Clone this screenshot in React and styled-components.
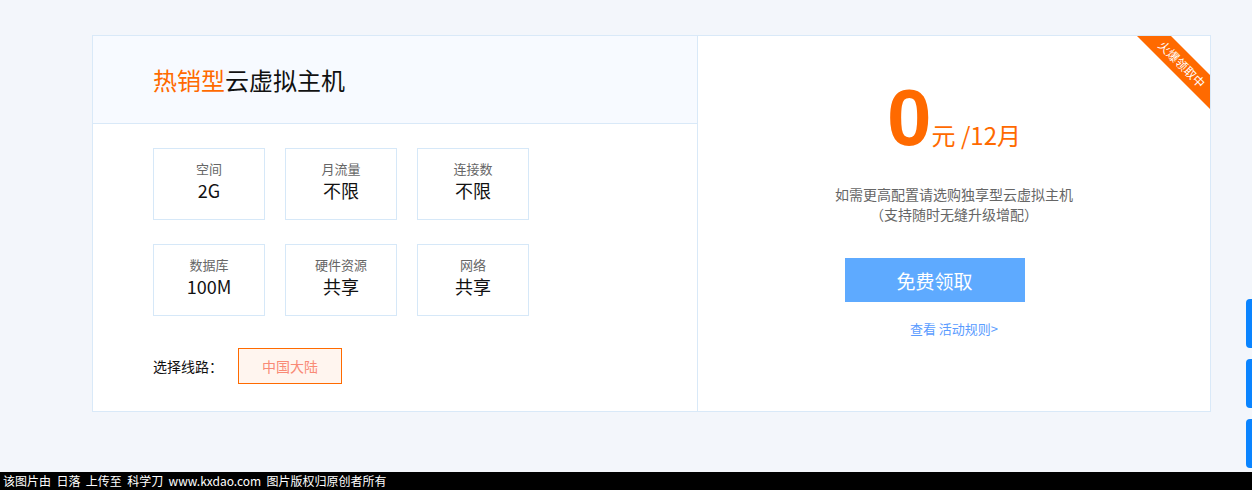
import React from "react";
import styled, { createGlobalStyle } from "styled-components";

const Global = createGlobalStyle`
  html, body {
    margin: 0;
    padding: 0;
    background: #f3f6fb;
    font-family: "Microsoft YaHei", "Noto Sans CJK SC", "Liberation Sans", sans-serif;
  }
`;

const Page = styled.div`
  height: 490px;
  padding-top: 35px;
  box-sizing: border-box;
`;

const Card = styled.div`
  margin-left: 92px;
  width: 1119px;
  height: 377px;
  display: flex;
  border: 1px solid #d9e9f8;
  box-sizing: border-box;
  background: #fff;
`;

const LeftPanel = styled.div`
  width: 604px;
  border-right: 1px solid #d9e9f8;
  display: flex;
  flex-direction: column;
`;

const Header = styled.div`
  height: 87px;
  background: #f7faff;
  border-bottom: 1px solid #d9e9f8;
  display: flex;
  align-items: center;
  padding-left: 60px;
  font-size: 24px;
  color: #111;
`;

const Hot = styled.span`
  color: #ff6a00;
`;

const Grid = styled.div`
  display: grid;
  grid-template-columns: repeat(3, 112px);
  grid-auto-rows: 72px;
  column-gap: 20px;
  row-gap: 24px;
  padding: 24px 0 0 60px;
`;

const Spec = styled.div`
  border: 1px solid #d6e8f8;
  display: flex;
  flex-direction: column;
  align-items: center;
  justify-content: center;
  padding-bottom: 6px;
`;

const SpecLabel = styled.div`
  font-size: 13px;
  color: #666;
  line-height: 18px;
`;

const SpecValue = styled.div`
  font-size: 18px;
  color: #111;
  line-height: 24px;
`;

const LineRow = styled.div`
  display: flex;
  align-items: center;
  padding: 32px 0 0 60px;
  font-size: 14px;
  color: #111;
`;

const LineButton = styled.div`
  margin-left: 15px;
  width: 104px;
  height: 36px;
  box-sizing: border-box;
  border: 1px solid #ff6a00;
  background: #fff5ef;
  color: #f98a76;
  font-size: 14px;
  display: flex;
  align-items: center;
  justify-content: center;
`;

const RightPanel = styled.div`
  flex: 1;
  position: relative;
  overflow: hidden;
  display: flex;
  flex-direction: column;
  align-items: center;
  padding-top: 42px;
`;

const Ribbon = styled.div`
  position: absolute;
  top: 0;
  right: 0;
  width: 74px;
  height: 74px;
  overflow: hidden;
`;

const RibbonBand = styled.div`
  position: absolute;
  left: -9px;
  top: 16px;
  width: 110px;
  height: 24px;
  line-height: 24px;
  background: #ff6a00;
  color: #fff;
  font-size: 12px;
  text-align: center;
  transform: rotate(45deg);
`;

const Price = styled.div`
  display: flex;
  align-items: baseline;
  color: #ff6a00;
`;

const Zero = styled.span`
  font-family: "Liberation Sans", Arial, sans-serif;
  font-weight: bold;
  font-size: 80px;
  line-height: 80px;
`;

const Unit = styled.span`
  font-size: 24px;
`;

const Note = styled.div`
  margin-top: 26px;
  font-size: 14px;
  color: #666;
  line-height: 20px;
  text-align: center;
`;

const ClaimButton = styled.div`
  margin-top: 34px;
  margin-right: 39px;
  width: 180px;
  height: 44px;
  background: #5eaaff;
  color: #fff;
  font-size: 19px;
  display: flex;
  align-items: center;
  justify-content: center;
`;

const RuleLink = styled.div`
  margin-top: 17px;
  font-size: 13px;
  color: #5a9cff;
`;

const SideTabs = styled.div`
  position: fixed;
  right: 0;
  top: 299px;
  display: flex;
  flex-direction: column;
  gap: 11px;
`;

const SideTab = styled.div`
  width: 6px;
  height: 49px;
  background: #0a84ff;
  border-radius: 4px 0 0 4px;
`;

const Footer = styled.div`
  position: fixed;
  left: 0;
  bottom: 0;
  width: 100%;
  height: 18px;
  background: #000;
  color: #fff;
  font-size: 12px;
  line-height: 18px;
  padding-left: 3px;
  box-sizing: border-box;
  white-space: pre;
`;

const specs = [
  { label: "空间", value: "2G" },
  { label: "月流量", value: "不限" },
  { label: "连接数", value: "不限" },
  { label: "数据库", value: "100M" },
  { label: "硬件资源", value: "共享" },
  { label: "网络", value: "共享" },
];

export default function App() {
  return (
    <Page>
      <Global />
      <Card>
        <LeftPanel>
          <Header>
            <Hot>热销型</Hot>云虚拟主机
          </Header>
          <Grid>
            {specs.map((s) => (
              <Spec key={s.label}>
                <SpecLabel>{s.label}</SpecLabel>
                <SpecValue>{s.value}</SpecValue>
              </Spec>
            ))}
          </Grid>
          <LineRow>
            选择线路：
            <LineButton>中国大陆</LineButton>
          </LineRow>
        </LeftPanel>
        <RightPanel>
          <Ribbon>
            <RibbonBand>火爆领取中</RibbonBand>
          </Ribbon>
          <Price>
            <Zero>0</Zero>
            <Unit>元 /12月</Unit>
          </Price>
          <Note>
            如需更高配置请选购独享型云虚拟主机
            <br />
            （支持随时无缝升级增配）
          </Note>
          <ClaimButton>免费领取</ClaimButton>
          <RuleLink>查看 活动规则&gt;</RuleLink>
        </RightPanel>
      </Card>
      <SideTabs>
        <SideTab />
        <SideTab />
        <SideTab />
      </SideTabs>
      <Footer>该图片由  日落  上传至  科学刀  www.kxdao.com  图片版权归原创者所有</Footer>
    </Page>
  );
}
